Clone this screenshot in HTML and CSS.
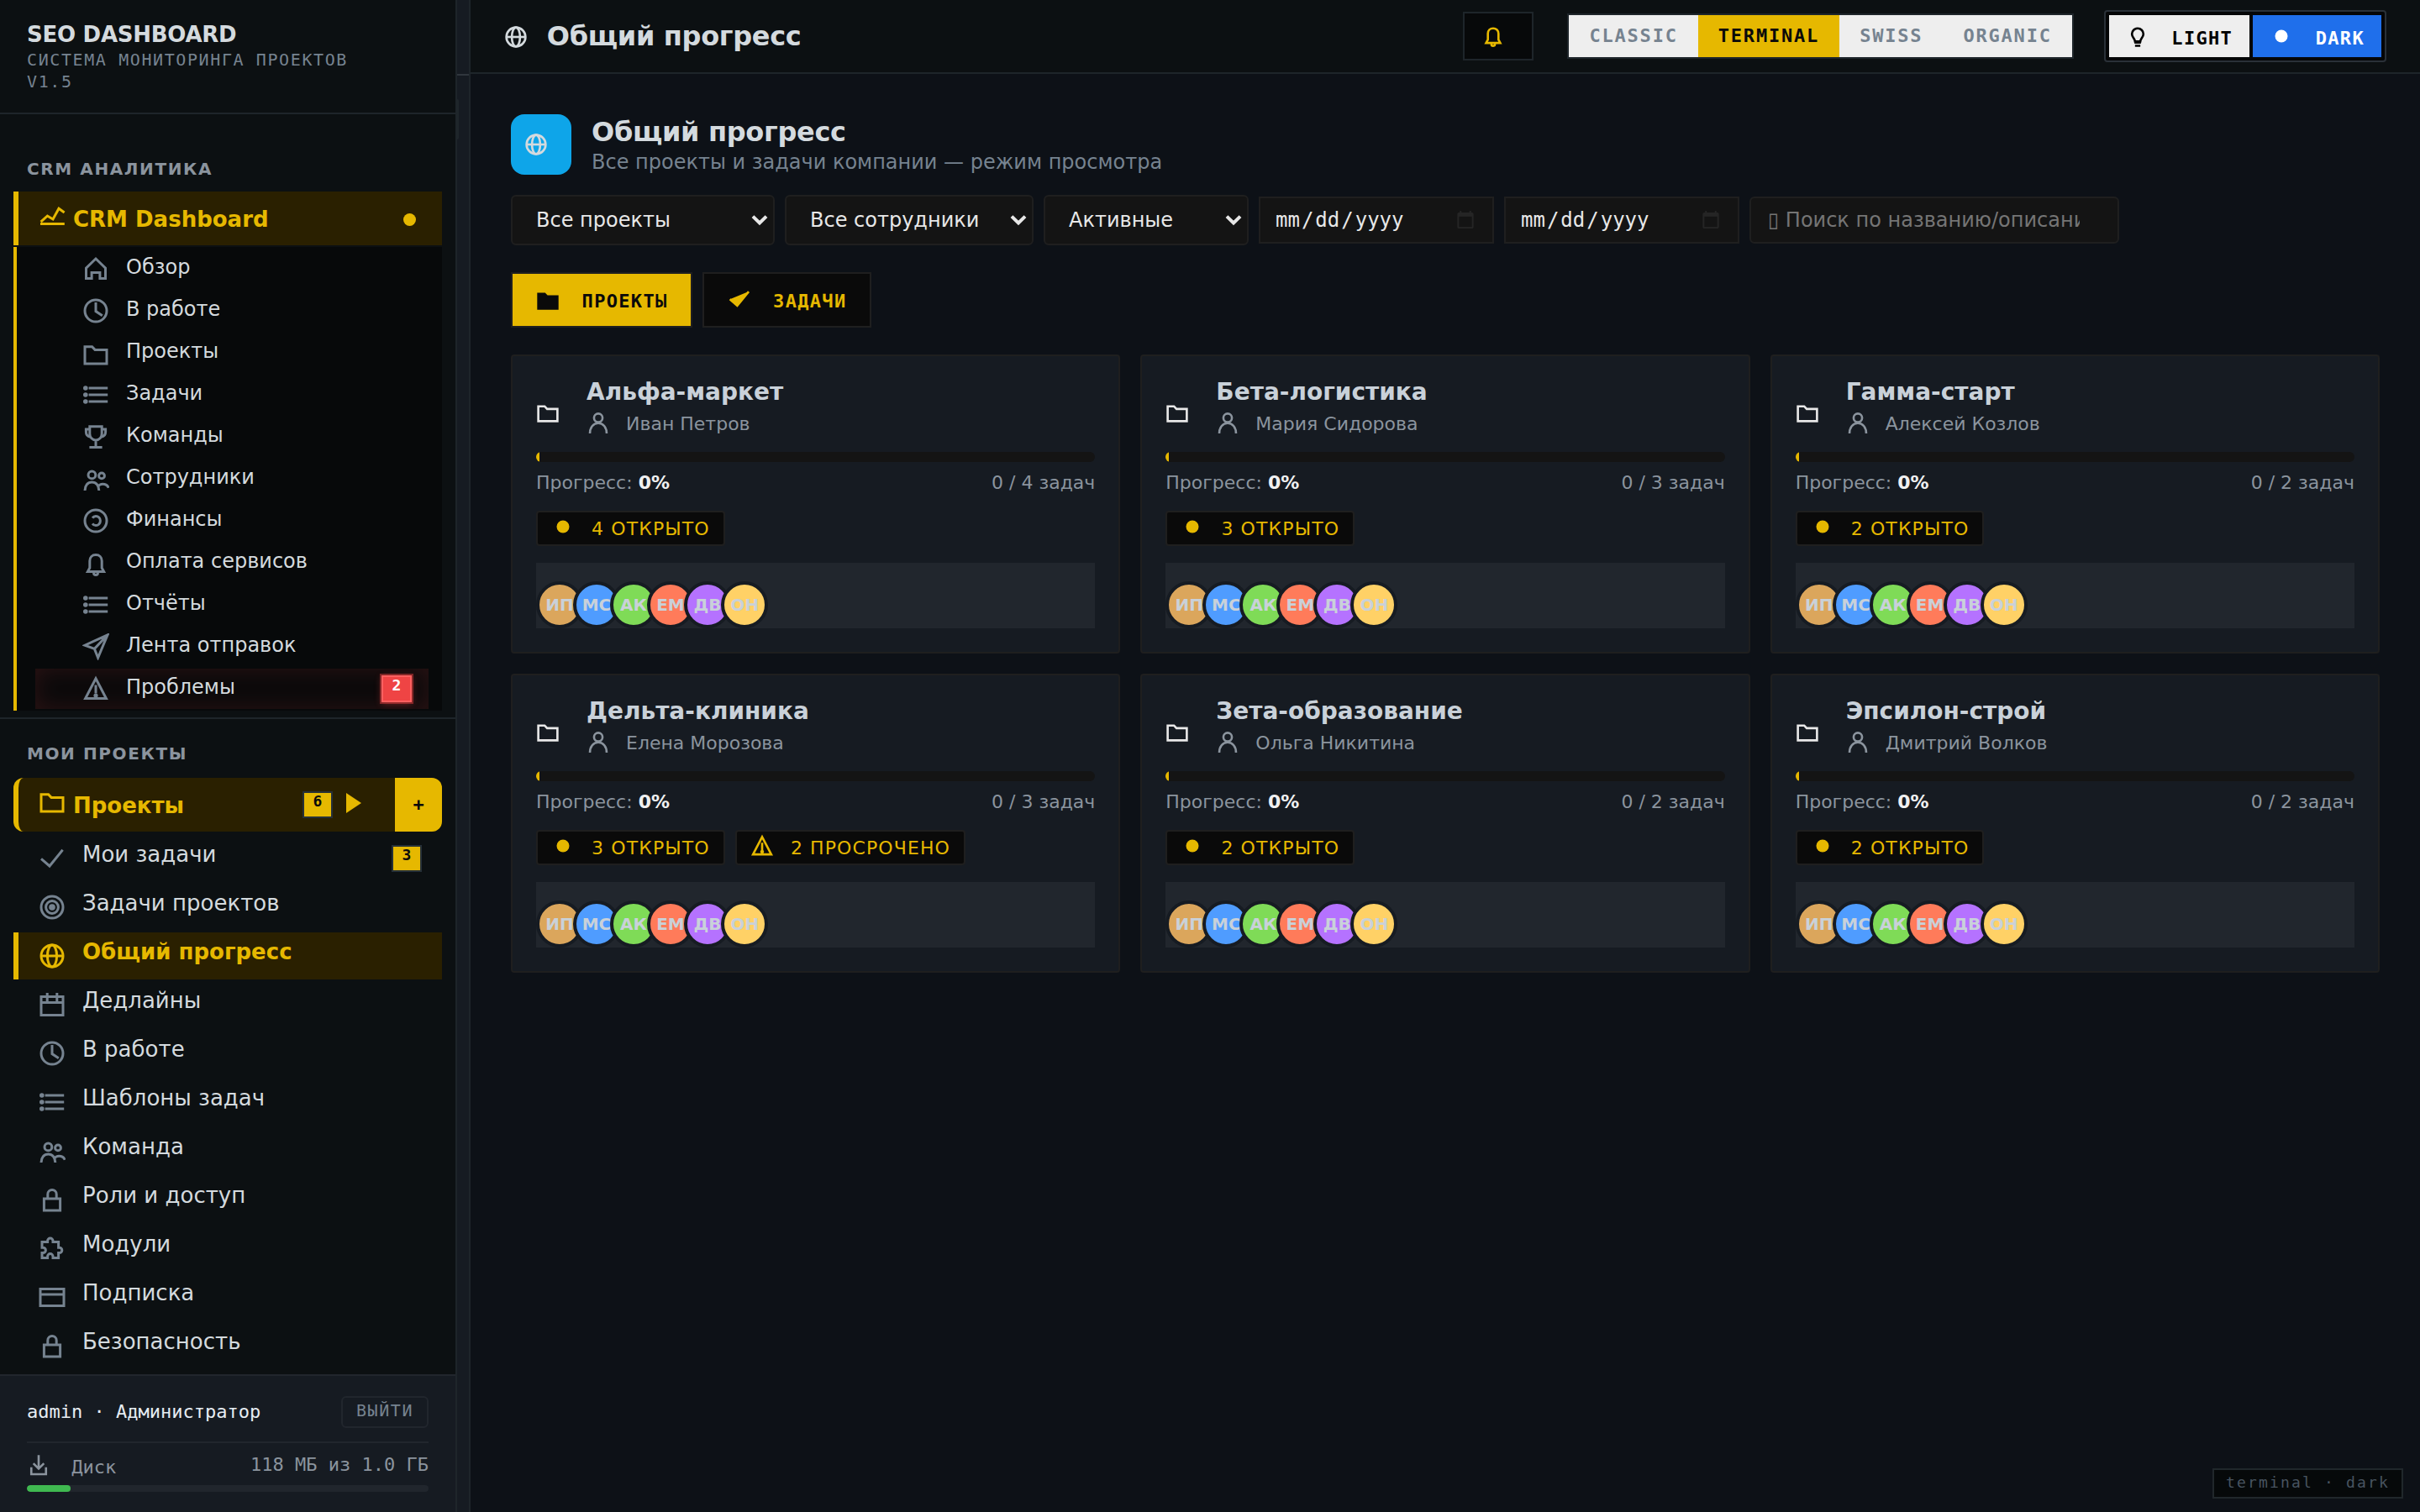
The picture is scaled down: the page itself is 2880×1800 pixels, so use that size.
FILE: index.html
```html
<!DOCTYPE html>
<html lang="ru">
<head>
    <meta charset="UTF-8">
    <meta name="viewport" content="width=device-width, initial-scale=1.0">
    <title>SEO Dashboard</title>
    <link rel="stylesheet" href="styles.css">
</head>
<body>
    <!-- icon sprite -->
    <svg class="sprite">
        <symbol id="i-chart" viewBox="0 0 16 16"><path d="M1 13.7h14.4M1.3 12.6L5.2 9l3.3 2L12 4.6 15.3 7"/></symbol>
        <symbol id="i-home" viewBox="0 0 16 16"><path d="M2.25 13.75V7.6L8 2l5.75 5.6v6.15h-3.3v-3.5h-4.9v3.5z"/></symbol>
        <symbol id="i-clock" viewBox="0 0 16 16"><circle cx="8" cy="8" r="6.5"/><path d="M8 3v5.3l3.9 2.6"/></symbol>
        <symbol id="i-folder" viewBox="0 0 16 16"><path d="M1.5 4.4h4.3l1.7 1.8h7v8.3h-13z"/></symbol>
        <symbol id="i-list" viewBox="0 0 16 16"><path d="M3.8 4h11.3M3.8 8h11.3M3.8 12h11.3"/><g fill="currentColor" stroke="none"><circle cx="1.9" cy="4" r="1.4"/><circle cx="1.9" cy="8" r="1.4"/><circle cx="1.9" cy="12" r="1.4"/></g></symbol>
        <symbol id="i-trophy" viewBox="0 0 16 16"><path d="M4.4 1.9h7.2v4.3c0 2.1-1.6 3.8-3.6 3.8S4.4 8.300 4.4 6.200zM4.400 3.500H2.200v1.600c0 1.500.900 2.700 2.600 3M11.600 3.500h2.200v1.600c0 1.500-.9 2.700-2.600 3M8 10v4.300M4.200 14.300h7.600"/></symbol>
        <symbol id="i-users" viewBox="0 0 16 16"><circle cx="5.700" cy="5.700" r="2.200"/><circle cx="11.500" cy="6.200" r="1.700"/><path d="M1.500 15c0-3 1.700-5 4.200-5s4.200 2 4.200 5M9.300 12.600c.7-1 1.700-1.500 2.800-1.500 1.800 0 3 .900 3.500 2.300"/></symbol>
        <symbol id="i-coin" viewBox="0 0 16 16"><circle cx="8" cy="8" r="6.5"/><path d="M6 6.300C6.500 5.600 7.200 5.200 8 5.200c1.500 0 2.700 1.300 2.700 2.800S9.500 10.800 8 10.800c-.800 0-1.500-.4-2-1.100"/></symbol>
        <symbol id="i-bell" viewBox="0 0 16 16"><path d="M3.200 13.200h9.600L11.600 11V6.900c0-2.100-1.500-3.600-3.600-3.600S4.400 4.800 4.400 6.900V11zM6.800 13.400v.7c0 1.500 2.400 1.500 2.400 0v-.7"/></symbol>
        <symbol id="i-send" viewBox="0 0 16 16"><path d="M15 .9L1.500 7.100l5.700 2.100 2.100 5.300zM7.200 9.200L15 .9"/></symbol>
        <symbol id="i-warn" viewBox="0 0 16 16"><path d="M8 1.900l6.200 11.900H1.800zM8 5.800v5"/><circle cx="8" cy="12" r="1.300" fill="currentColor" stroke="none"/></symbol>
        <symbol id="i-check" viewBox="0 0 16 16"><path d="M1.500 8.200l5 4.300 7.800-9.600"/></symbol>
        <symbol id="i-target" viewBox="0 0 16 16"><circle cx="8" cy="8" r="6.5"/><circle cx="8" cy="8" r="3.700"/><circle cx="8" cy="8" r="1.900" fill="currentColor" stroke="none"/></symbol>
        <symbol id="i-globe" viewBox="0 0 16 16"><circle cx="8" cy="8" r="6.5"/><ellipse cx="8" cy="8" rx="2.800" ry="6.500"/><path d="M1.500 8h13"/></symbol>
        <symbol id="i-calendar" viewBox="0 0 16 16"><path d="M1.500 3.300h13v11h-13zM1.500 6.800h13M5.100 1v5M10.900 1v5"/></symbol>
        <symbol id="i-lock" viewBox="0 0 16 16"><path d="M3.200 7.500h9.600v7H3.200zM5.400 7.500V4.900c0-3.500 5.200-3.500 5.200 0v2.600"/></symbol>
        <symbol id="i-puzzle" viewBox="0 0 16 16"><path d="M2 4.200h3.300v-.6a1.600 1.600 0 0 1 3.200 0v.6h3.300v3.400h.5a1.600 1.600 0 0 1 0 3.200h-.5v2.900H8.500v-.8a1.600 1.600 0 0 0-3.200 0v.8H2v-2.900h.6a1.600 1.600 0 0 0 0-3.200H2z"/></symbol>
        <symbol id="i-card" viewBox="0 0 16 16"><path d="M1 3.200h14v10.100H1zM1 6.500h14"/></symbol>
        <symbol id="i-download" viewBox="0 0 16 16"><path d="M8 1.300v9M4.400 6.900L8 10.500l3.600-3.600M3 9.600v4.700h10V9.600"/></symbol>
        <symbol id="i-user" viewBox="0 0 16 16"><circle cx="8" cy="5.400" r="2.900"/><path d="M2.300 16c0-4 2.300-7 5.700-7s5.700 3 5.700 7"/></symbol>
        <symbol id="i-dot" viewBox="0 0 16 16"><circle cx="8" cy="8" r="4.300" fill="currentColor" stroke="none"/></symbol>
        <symbol id="i-bulb" viewBox="0 0 16 16"><path d="M6.200 11.600c0-1.800-2.100-2.600-2.100-5a3.900 3.900 0 0 1 7.800 0c0 2.400-2.100 3.200-2.100 5z"/><path d="M5.800 12.400h4.400M6.200 14.600h3.600"/></symbol>
        <symbol id="i-down" viewBox="0 0 10 7"><path d="M1 1.300L5 5.200l4-3.900"/></symbol>
    </svg>

    <div class="app">
        <aside class="sidebar">
            <div class="sidebar-header">
                <div class="brand">SEO DASHBOARD</div>
                <div class="brand-sub">Система мониторинга проектов<br>v1.5</div>
            </div>

            <div class="sidebar-scroll">
                <div class="nav-section section-crm">
                    <div class="section-label">CRM Аналитика</div>
                    <div class="nav-group">
                        <svg class="nav-icon"><use href="#i-chart"/></svg>
                        <span class="group-title">CRM Dashboard</span>
                        <span class="group-dot"></span>
                    </div>
                    <div class="submenu">
                        <a class="sub-item"><svg class="nav-icon"><use href="#i-home"/></svg><span>Обзор</span></a>
                        <a class="sub-item"><svg class="nav-icon"><use href="#i-clock"/></svg><span>В работе</span></a>
                        <a class="sub-item"><svg class="nav-icon"><use href="#i-folder"/></svg><span>Проекты</span></a>
                        <a class="sub-item"><svg class="nav-icon"><use href="#i-list"/></svg><span>Задачи</span></a>
                        <a class="sub-item"><svg class="nav-icon"><use href="#i-trophy"/></svg><span>Команды</span></a>
                        <a class="sub-item"><svg class="nav-icon"><use href="#i-users"/></svg><span>Сотрудники</span></a>
                        <a class="sub-item"><svg class="nav-icon"><use href="#i-coin"/></svg><span>Финансы</span></a>
                        <a class="sub-item"><svg class="nav-icon"><use href="#i-bell"/></svg><span>Оплата сервисов</span></a>
                        <a class="sub-item"><svg class="nav-icon"><use href="#i-list"/></svg><span>Отчёты</span></a>
                        <a class="sub-item"><svg class="nav-icon"><use href="#i-send"/></svg><span>Лента отправок</span></a>
                        <a class="sub-item problem"><svg class="nav-icon"><use href="#i-warn"/></svg><span>Проблемы</span><b class="count red">2</b></a>
                    </div>
                </div>

                <div class="nav-section section-projects">
                    <div class="section-label">Мои проекты</div>
                    <div class="nav-group rounded">
                        <svg class="nav-icon"><use href="#i-folder"/></svg>
                        <span class="group-title">Проекты</span>
                        <b class="count">6</b>
                        <span class="caret"></span>
                        <button class="add-btn">+</button>
                    </div>
                    <a class="nav-item"><svg class="nav-icon"><use href="#i-check"/></svg><span>Мои задачи</span><b class="count">3</b></a>
                    <a class="nav-item"><svg class="nav-icon"><use href="#i-target"/></svg><span>Задачи проектов</span></a>
                    <a class="nav-item active"><svg class="nav-icon"><use href="#i-globe"/></svg><span>Общий прогресс</span></a>
                    <a class="nav-item"><svg class="nav-icon"><use href="#i-calendar"/></svg><span>Дедлайны</span></a>
                    <a class="nav-item"><svg class="nav-icon"><use href="#i-clock"/></svg><span>В работе</span></a>
                    <a class="nav-item"><svg class="nav-icon"><use href="#i-list"/></svg><span>Шаблоны задач</span></a>
                    <a class="nav-item"><svg class="nav-icon"><use href="#i-users"/></svg><span>Команда</span></a>
                    <a class="nav-item"><svg class="nav-icon"><use href="#i-lock"/></svg><span>Роли и доступ</span></a>
                    <a class="nav-item"><svg class="nav-icon"><use href="#i-puzzle"/></svg><span>Модули</span></a>
                    <a class="nav-item"><svg class="nav-icon"><use href="#i-card"/></svg><span>Подписка</span></a>
                    <a class="nav-item"><svg class="nav-icon"><use href="#i-lock"/></svg><span>Безопасность</span></a>
                </div>
            </div>

            <div class="sidebar-footer">
                <div class="user-row">
                    <span class="user-name">admin · Администратор</span>
                    <button class="logout">Выйти</button>
                </div>
                <div class="disk-row">
                    <span><svg class="icon"><use href="#i-download"/></svg> Диск</span>
                    <span>118 МБ из 1.0 ГБ</span>
                </div>
                <div class="disk-bar"><div class="disk-fill" style="width: 10.9%"></div></div>
            </div>
        </aside>

        <div class="resizer"></div>

        <main class="main">
            <header class="topbar">
                <div class="page-title"><svg class="icon"><use href="#i-globe"/></svg> Общий прогресс</div>
                <button class="bell-btn"><svg class="icon"><use href="#i-bell"/></svg></button>
                <div class="theme-switch">
                    <button>Classic</button>
                    <button class="active">Terminal</button>
                    <button>Swiss</button>
                    <button>Organic</button>
                </div>
                <div class="mode-switch">
                    <button><svg class="icon"><use href="#i-bulb"/></svg> Light</button>
                    <button class="active"><svg class="icon"><use href="#i-dot"/></svg> Dark</button>
                </div>
            </header>

            <div class="content">
                <div class="content-header">
                    <div class="header-icon"><svg class="icon"><use href="#i-globe"/></svg></div>
                    <div>
                        <h2>Общий прогресс</h2>
                        <p>Все проекты и задачи компании — режим просмотра</p>
                    </div>
                </div>

                <div class="filters">
                    <div class="select f-projects">
                        <select><option>Все проекты</option></select>
                        <svg class="arrow"><use href="#i-down"/></svg>
                    </div>
                    <div class="select f-staff">
                        <select><option>Все сотрудники</option></select>
                        <svg class="arrow"><use href="#i-down"/></svg>
                    </div>
                    <div class="select f-status">
                        <select><option>Активные</option></select>
                        <svg class="arrow"><use href="#i-down"/></svg>
                    </div>
                    <input type="date">
                    <input type="date">
                    <input type="search" placeholder="&#x25AF; Поиск по названию/описанию...">
                </div>

                <div class="tabs">
                    <button class="tab active"><svg class="icon"><use href="#i-folder"/></svg> Проекты</button>
                    <button class="tab"><svg class="icon"><use href="#i-check"/></svg> Задачи</button>
                </div>

                <div class="grid">
                    <div class="card">
                        <div class="card-head">
                            <svg class="icon"><use href="#i-folder"/></svg>
                            <div>
                                <div class="card-title">Альфа-маркет</div>
                                <div class="card-owner"><svg class="icon"><use href="#i-user"/></svg> Иван Петров</div>
                            </div>
                        </div>
                        <div class="bar"><div class="bar-fill"></div></div>
                        <div class="stats"><span>Прогресс: <b>0%</b></span><span>0 / 4 задач</span></div>
                        <div class="tags">
                            <span class="tag"><svg class="icon"><use href="#i-dot"/></svg> 4 открыто</span>
                        </div>
                        <div class="team"><i class="av a1">ИП</i><i class="av a2">МС</i><i class="av a3">АК</i><i class="av a4">ЕМ</i><i class="av a5">ДВ</i><i class="av a6">ОН</i></div>
                    </div>

                    <div class="card">
                        <div class="card-head">
                            <svg class="icon"><use href="#i-folder"/></svg>
                            <div>
                                <div class="card-title">Бета-логистика</div>
                                <div class="card-owner"><svg class="icon"><use href="#i-user"/></svg> Мария Сидорова</div>
                            </div>
                        </div>
                        <div class="bar"><div class="bar-fill"></div></div>
                        <div class="stats"><span>Прогресс: <b>0%</b></span><span>0 / 3 задач</span></div>
                        <div class="tags">
                            <span class="tag"><svg class="icon"><use href="#i-dot"/></svg> 3 открыто</span>
                        </div>
                        <div class="team"><i class="av a1">ИП</i><i class="av a2">МС</i><i class="av a3">АК</i><i class="av a4">ЕМ</i><i class="av a5">ДВ</i><i class="av a6">ОН</i></div>
                    </div>

                    <div class="card">
                        <div class="card-head">
                            <svg class="icon"><use href="#i-folder"/></svg>
                            <div>
                                <div class="card-title">Гамма-старт</div>
                                <div class="card-owner"><svg class="icon"><use href="#i-user"/></svg> Алексей Козлов</div>
                            </div>
                        </div>
                        <div class="bar"><div class="bar-fill"></div></div>
                        <div class="stats"><span>Прогресс: <b>0%</b></span><span>0 / 2 задач</span></div>
                        <div class="tags">
                            <span class="tag"><svg class="icon"><use href="#i-dot"/></svg> 2 открыто</span>
                        </div>
                        <div class="team"><i class="av a1">ИП</i><i class="av a2">МС</i><i class="av a3">АК</i><i class="av a4">ЕМ</i><i class="av a5">ДВ</i><i class="av a6">ОН</i></div>
                    </div>

                    <div class="card">
                        <div class="card-head">
                            <svg class="icon"><use href="#i-folder"/></svg>
                            <div>
                                <div class="card-title">Дельта-клиника</div>
                                <div class="card-owner"><svg class="icon"><use href="#i-user"/></svg> Елена Морозова</div>
                            </div>
                        </div>
                        <div class="bar"><div class="bar-fill"></div></div>
                        <div class="stats"><span>Прогресс: <b>0%</b></span><span>0 / 3 задач</span></div>
                        <div class="tags">
                            <span class="tag"><svg class="icon"><use href="#i-dot"/></svg> 3 открыто</span>
                            <span class="tag"><svg class="icon"><use href="#i-warn"/></svg> 2 просрочено</span>
                        </div>
                        <div class="team"><i class="av a1">ИП</i><i class="av a2">МС</i><i class="av a3">АК</i><i class="av a4">ЕМ</i><i class="av a5">ДВ</i><i class="av a6">ОН</i></div>
                    </div>

                    <div class="card">
                        <div class="card-head">
                            <svg class="icon"><use href="#i-folder"/></svg>
                            <div>
                                <div class="card-title">Зета-образование</div>
                                <div class="card-owner"><svg class="icon"><use href="#i-user"/></svg> Ольга Никитина</div>
                            </div>
                        </div>
                        <div class="bar"><div class="bar-fill"></div></div>
                        <div class="stats"><span>Прогресс: <b>0%</b></span><span>0 / 2 задач</span></div>
                        <div class="tags">
                            <span class="tag"><svg class="icon"><use href="#i-dot"/></svg> 2 открыто</span>
                        </div>
                        <div class="team"><i class="av a1">ИП</i><i class="av a2">МС</i><i class="av a3">АК</i><i class="av a4">ЕМ</i><i class="av a5">ДВ</i><i class="av a6">ОН</i></div>
                    </div>

                    <div class="card">
                        <div class="card-head">
                            <svg class="icon"><use href="#i-folder"/></svg>
                            <div>
                                <div class="card-title">Эпсилон-строй</div>
                                <div class="card-owner"><svg class="icon"><use href="#i-user"/></svg> Дмитрий Волков</div>
                            </div>
                        </div>
                        <div class="bar"><div class="bar-fill"></div></div>
                        <div class="stats"><span>Прогресс: <b>0%</b></span><span>0 / 2 задач</span></div>
                        <div class="tags">
                            <span class="tag"><svg class="icon"><use href="#i-dot"/></svg> 2 открыто</span>
                        </div>
                        <div class="team"><i class="av a1">ИП</i><i class="av a2">МС</i><i class="av a3">АК</i><i class="av a4">ЕМ</i><i class="av a5">ДВ</i><i class="av a6">ОН</i></div>
                    </div>
                </div>
            </div>
        </main>
    </div>

    <div class="theme-label">terminal · dark</div>
</body>
</html>
```
FILE: styles.css
```css
:root {
    --bg: #0d1117;
    --panel: #0c1012;
    --surface: #161b22;
    --surface-2: #21262d;
    --line: #1e252a;
    --line-dark: #1f1f1f;
    --text: #d4dade;
    --muted: #768390;
    --accent: #e6b800;
    --accent-bg: #2a2000;
    --sans: "DejaVu Sans", sans-serif;
    --mono: "DejaVu Sans Mono", monospace;
}
* {
    box-sizing: border-box;
}
body {
    zoom: 2;
    margin: 0;
    width: 1440px;
    height: 900px;
    overflow: hidden;
    background: var(--bg);
    color: var(--text);
    font-family: var(--sans);
    font-size: 13px;
}
button {
    margin: 0;
    border: none;
    border-radius: 0;
    font-family: var(--mono);
    font-size: 11px;
    font-weight: bold;
    text-transform: uppercase;
    white-space: nowrap;
}
.sprite {
    display: none;
}
.icon,
.nav-icon {
    fill: none;
    stroke: currentColor;
    stroke-width: 1.5;
    flex-shrink: 0;
}
.icon {
    display: inline-block;
    width: 14px;
    height: 14px;
    margin-right: 6px;
    vertical-align: -2px;
}
.nav-icon {
    width: 16px;
    height: 16px;
    color: var(--muted);
}
.app {
    display: flex;
    height: 900px;
}

/* Sidebar */
.sidebar {
    display: flex;
    flex-direction: column;
    width: 272px;
    flex-shrink: 0;
    background: var(--panel);
    border-right: 1px solid var(--line);
}
.sidebar-header {
    padding: 12px 16px;
    border-bottom: 1px solid var(--line);
}
.brand {
    font-weight: bold;
    line-height: 17px;
    letter-spacing: -0.01em;
}
.brand-sub {
    font-family: var(--mono);
    font-size: 10px;
    line-height: 13px;
    letter-spacing: 0.08em;
    text-transform: uppercase;
    color: var(--muted);
}
.sidebar-scroll {
    flex: 1;
    min-height: 0;
    overflow: hidden;
}
.nav-section {
    padding: 0 8px;
}
.section-crm {
    padding-top: 26.5px;
    padding-bottom: 4px;
    border-bottom: 1px solid var(--line);
}
.section-projects {
    padding-top: 14.5px;
}
.section-label {
    padding-left: 8px;
    margin-bottom: 7.5px;
    font-size: 10px;
    font-weight: bold;
    line-height: 12px;
    letter-spacing: 0.08em;
    text-transform: uppercase;
    color: #8b949e;
}
.section-projects .section-label {
    margin-bottom: 8.5px;
}
.nav-group {
    display: flex;
    align-items: center;
    height: 32px;
    padding-left: 12px;
    border-left: 3px solid var(--accent);
    background: var(--accent-bg);
    color: var(--accent);
    font-weight: bold;
}
.nav-group .nav-icon {
    margin-right: 4.5px;
    margin-bottom: 5px;
    color: var(--accent);
}
.group-title {
    flex: 1;
    padding-top: 1px;
}
.group-dot {
    width: 7.5px;
    height: 7.5px;
    margin: 1px 15.5px 0 0;
    border-radius: 50%;
    background: var(--accent);
}
.nav-group.rounded {
    margin-bottom: 2px;
    border-radius: 6px;
    overflow: hidden;
}
.caret {
    margin: -2px 20px 0 8px;
    border-left: 9px solid var(--accent);
    border-top: 6px solid transparent;
    border-bottom: 6px solid transparent;
}
.add-btn {
    align-self: stretch;
    width: 28px;
    padding: 0 0 1px;
    background: var(--accent);
    color: #0a0a0a;
}
.submenu {
    display: flex;
    flex-direction: column;
    gap: 1px;
    margin-top: 1px;
    padding: 1px 8px 1px 11px;
    border-left: 2px solid var(--accent);
    background: #07090a;
}
.sub-item,
.nav-item {
    display: flex;
    align-items: center;
    gap: 10px;
}
.sub-item {
    height: 24px;
    padding: 0 10px 0 28px;
    font-size: 12px;
}
.sub-item span {
    flex: 1;
    margin-bottom: 2.5px;
}
.nav-item {
    height: 28px;
    margin-bottom: 1px;
    padding: 0 12px;
    border-left: 3px solid transparent;
}
.nav-item span {
    flex: 1;
    margin-bottom: 5px;
}
.nav-item.active {
    border-left-color: var(--accent);
    background: var(--accent-bg);
    color: var(--accent);
    font-weight: bold;
}
.nav-item.active .nav-icon {
    color: var(--accent);
}
.problem {
    background: #0b0a0b;
    box-shadow: inset 0 0 14px rgba(239, 68, 68, 0.14);
}
.count {
    width: 18px;
    height: 16px;
    border: 1px solid #263038;
    background: var(--accent);
    color: #0a0a0a;
    font-family: var(--mono);
    font-size: 9px;
    line-height: 10px;
    text-align: center;
}
.count.red {
    border-color: #ff6060;
    background: #ef4444;
    color: #fff;
    box-shadow: 0 0 0 1px rgba(239, 68, 68, 0.45), 0 1px 4px rgba(239, 68, 68, 0.4);
}
.sidebar-footer {
    padding: 12px 16px;
    border-top: 1px solid var(--surface-2);
    background: var(--surface);
    font-family: var(--mono);
    font-size: 11px;
}
.user-row {
    display: flex;
    align-items: center;
    justify-content: space-between;
    padding-bottom: 8px;
    border-bottom: 1px solid var(--surface-2);
    color: #e6edf3;
}
.user-name {
    padding-bottom: 1px;
}
.logout {
    width: 52px;
    height: 19px;
    padding: 0 0 2px;
    border: 1px solid var(--surface-2);
    border-radius: 3px;
    background: none;
    color: var(--muted);
    font-size: 10px;
    font-weight: normal;
    letter-spacing: 0.08em;
}
.disk-row {
    display: flex;
    justify-content: space-between;
    height: 14px;
    margin: 6px 0 5px;
    line-height: 14px;
    color: #8b949e;
}
.disk-bar {
    height: 4px;
    border-radius: 2px;
    background: var(--surface-2);
    overflow: hidden;
}
.disk-fill {
    height: 100%;
    border-radius: 2px;
    background: #3fb950;
}

/* Resize handle between sidebar and content */
.resizer {
    position: relative;
    width: 8px;
    flex-shrink: 0;
    background: var(--surface);
    border-right: 1px solid var(--line);
}
.resizer::before {
    content: "";
    position: absolute;
    top: 44px;
    left: 0;
    right: 0;
    height: 1px;
    background: #30363d;
}
.resizer::after {
    content: "";
    position: absolute;
    top: 59px;
    left: 0;
    width: 1px;
    height: 24px;
    border-radius: 0 2px 2px 0;
    background: #1f262b;
}

/* Top bar */
.main {
    flex: 1;
    min-width: 0;
}
.topbar {
    display: flex;
    align-items: center;
    height: 44px;
    padding: 0 20px;
    background: var(--panel);
    border-bottom: 1px solid var(--line);
}
.page-title {
    flex: 1;
    font-size: 16px;
    font-weight: bold;
    letter-spacing: -0.01em;
}
.bell-btn {
    width: 42px;
    height: 29px;
    padding: 0 0 1px 10px;
    border: 1px solid var(--line);
    background: #07090a;
    color: var(--accent);
    text-align: left;
}
.theme-switch {
    display: flex;
    height: 27px;
    margin: 0 18px 0 20px;
    border: 1px solid var(--line);
}
.theme-switch button {
    padding: 0 12px 1px;
    background: #eee;
    color: var(--muted);
    letter-spacing: 0.082em;
}
.theme-switch .active {
    background: var(--accent);
    color: #0a0a0a;
}
.mode-switch {
    display: flex;
    gap: 2px;
    height: 31px;
    padding: 2px;
    border: 1px solid #2a3138;
    border-radius: 2px;
    background: #050607;
}
.mode-switch button {
    padding: 0 10px;
    background: #eee;
    color: #000;
    letter-spacing: 0.06em;
}
.mode-switch .active {
    background: #1f6feb;
    color: #fff;
}

/* Content */
.content {
    padding: 24px;
}
.content-header {
    display: flex;
    align-items: center;
    gap: 12px;
}
.header-icon {
    display: flex;
    align-items: center;
    justify-content: center;
    width: 36px;
    height: 36px;
    border-radius: 8px;
    background: #0ea5e9;
}
h2 {
    margin: 0;
    font-size: 16px;
    line-height: 21px;
    letter-spacing: -0.01em;
}
p {
    margin: 0;
    font-size: 12px;
    line-height: 15px;
    color: var(--muted);
}
.filters {
    display: flex;
    align-items: center;
    gap: 6px;
    margin-top: 12px;
}
.select {
    position: relative;
}
select,
input {
    margin: 0;
    border: 1px solid var(--line-dark);
    background: #141414;
    color: #e8e8e8;
    font-family: var(--sans);
    font-size: 12px;
    outline: none;
}
select {
    appearance: none;
    display: block;
    width: 100%;
    height: 30px;
    padding: 0 14px;
    border-radius: 3px;
}
.arrow {
    position: absolute;
    top: 11.5px;
    right: 4px;
    width: 10px;
    height: 7px;
    fill: none;
    stroke: #e8e8e8;
    stroke-width: 2;
    pointer-events: none;
}
input {
    height: 28px;
    padding: 0 8px;
}
input[type="date"] {
    width: 140px;
    font-family: var(--mono);
}
input[type="date"]::-webkit-calendar-picker-indicator {
    filter: invert(1);
    opacity: 0.07;
}
input[type="search"] {
    width: 220px;
    padding: 0 10px;
    border-radius: 3px;
}
.f-projects {
    width: 157px;
}
.f-staff {
    width: 148px;
}
.f-status {
    width: 122px;
}
.tabs {
    display: flex;
    gap: 6px;
    margin: 16px 0;
}
.tab {
    height: 33px;
    padding: 0 13.5px 1px 14px;
    border: 1px solid var(--line-dark);
    background: #0a0a0a;
    color: var(--accent);
    letter-spacing: 0.06em;
}
.tab.active {
    background: var(--accent);
    color: #0a0a0a;
}
.tab .icon {
    fill: currentColor;
}
.grid {
    display: grid;
    grid-template-columns: repeat(3, 1fr);
    gap: 12px;
}
.card {
    height: 178px;
    padding: 14px;
    border: 1px solid var(--line-dark);
    border-radius: 2px;
    background: var(--surface);
    font-size: 11px;
    color: #8b949e;
}
.card-head {
    display: flex;
    align-items: center;
    gap: 10px;
}
.card-head > .icon {
    margin-top: 4px;
    color: #e8e8e8;
}
.card-title {
    font-size: 14px;
    font-weight: bold;
    line-height: 15px;
    color: #c9d1d9;
}
.card-owner {
    height: 16px;
    margin-top: 3px;
    line-height: 16px;
}
.bar {
    height: 6px;
    margin-top: 9px;
    border-radius: 3px;
    background: #141414;
    overflow: hidden;
}
.bar-fill {
    width: 2px;
    height: 100%;
    background: var(--accent);
}
.stats {
    display: flex;
    justify-content: space-between;
    height: 16px;
    margin-top: 4px;
    line-height: 17px;
}
.stats b {
    color: #f0f0f0;
}
.tags {
    display: flex;
    gap: 6px;
    margin-top: 9px;
}
.tag {
    height: 21px;
    padding: 1px 8px 0;
    border: 1px solid var(--line-dark);
    border-radius: 2px;
    background: #0a0a0a;
    color: var(--accent);
    line-height: 18px;
    letter-spacing: 0.05em;
    text-transform: uppercase;
}
.team {
    display: flex;
    height: 39px;
    margin-top: 10px;
    padding-top: 11px;
    background: var(--surface-2);
}
.av {
    width: 28px;
    height: 28px;
    border: 2px solid var(--surface);
    border-radius: 50%;
    color: #c9d1d9;
    font-size: 10px;
    font-style: normal;
    font-weight: bold;
    line-height: 24px;
    text-align: center;
}
.av + .av {
    margin-left: -6px;
}
.a1 { background: #dba65c; }
.a2 { background: #4f9cff; }
.a3 { background: #7fdb57; }
.a4 { background: #ff7b5a; }
.a5 { background: #b572ff; }
.a6 { background: #ffd166; }

.theme-label {
    position: absolute;
    right: 10px;
    bottom: 8px;
    height: 18px;
    padding: 0 7px;
    border: 1px solid #20272b;
    background: #06090a;
    color: #485460;
    font-family: var(--mono);
    font-size: 9px;
    line-height: 15px;
    letter-spacing: 0.12em;
}
```
